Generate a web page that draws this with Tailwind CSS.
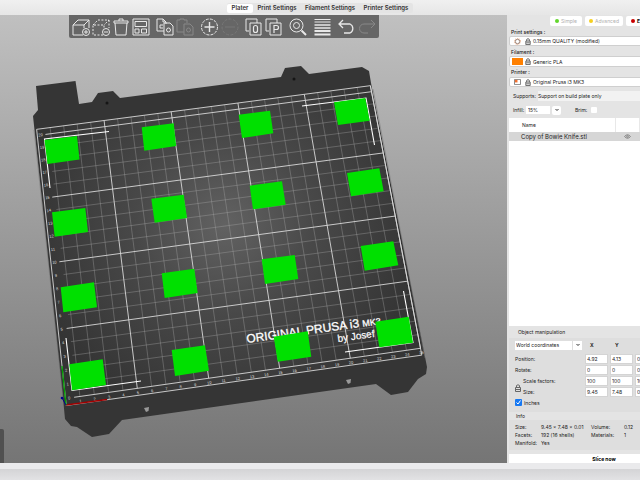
<!DOCTYPE html>
<html lang="en">
<head>
    <meta charset="UTF-8">
    <meta name="viewport" content="width=device-width, initial-scale=1.0">
    <title>PrusaSlicer - Plater</title>
    <script src="https://cdn.jsdelivr.net/npm/@tailwindcss/browser@4"></script>
</head>
<body class="flex h-screen flex-col overflow-hidden bg-[#e6e6e6] font-['Inter',sans-serif] text-[6px] leading-[8px] text-[#333]">
    <header class="flex h-[15px] shrink-0 justify-center bg-gradient-to-b from-[#f0f0f0] to-[#e6e6e6] pt-[3px]">
        <nav class="flex h-[10px] items-center rounded-xs bg-[#e4e4e4] font-semibold">
            <button class="h-[9px] w-[26px] rounded-xs bg-white">Plater</button>
            <button class="h-[9px] w-[48px]">Print Settings</button>
            <button class="h-[9px] w-[58px]">Filament Settings</button>
            <button class="h-[9px] w-[54px]">Printer Settings</button>
        </nav>
    </header>

    <main class="flex min-h-0 flex-1">
        <section class="relative min-w-0 flex-1 overflow-hidden bg-gradient-to-b from-[#c0c0c0] to-[#757575]">
            <svg id="scene" viewBox="0 15 507 448" preserveAspectRatio="xMinYMin meet" class="block h-full w-full" font-family="Liberation Sans, sans-serif">
                <defs>
                    <radialGradient id="bedLight" gradientUnits="userSpaceOnUse" cx="225" cy="225" r="200">
                        <stop offset="0" stop-color="#626262"/>
                        <stop offset="0.45" stop-color="#484848"/>
                        <stop offset="1" stop-color="#343434"/>
                    </radialGradient>
                </defs>
                <!-- steel sheet -->
                <path fill="#353535" d="M36 86L75.500 81L79 104L92 102L98 93L113 91L120 98L281 77L285 68L301 66L309 74L362 67L369 71L371 83L427 367L426 374L418 379L408 392L391 395L376 384L122 420L109 434L92 437L77 427L71 426L65 419L63 398L33 116L38 110Z"/>
                <path id="bedArea" fill="url(#bedLight)"/>
                <path fill="none" stroke="#777" stroke-width="0.500" d="M34 130L63 398M373 89L425 358"/>
                <circle cx="107" cy="103" r="1.500" fill="#151515"/>
                <circle cx="294" cy="79" r="1.500" fill="#151515"/>
                <path fill="#999" d="M144 408L149 407L148.500 411L146 412Z M346 380L351 379L350.500 383L348 384Z"/>
                <path id="minorLines" fill="none" stroke="#aaa" stroke-opacity="0.600" stroke-width="0.600"/>
                <path id="majorLines" fill="none" stroke="#d8d8d8" stroke-width="0.900"/>
                <path fill="none" stroke="#fff" stroke-width="1.100" d="M109 131.500L44.500 139L50 188M66 338L72 390.500L141 381M302 106L366 98L374.500 145M403.500 291L413 342.500L345 352"/>
                <g id="labels" fill="#ddd" font-size="4" text-anchor="middle"></g>
                <g fill="#fff">
                    <text transform="translate(247 343) rotate(-8)" font-size="12" stroke="#fff" stroke-width="0.300">ORIGINAL PRUSA i3 <tspan font-size="9">MK3</tspan></text>
                    <text transform="translate(338 342) rotate(-8)" font-size="10" stroke="#fff" stroke-width="0.200">by Josef Prusa</text>
                </g>
                <path stroke="#a00000" stroke-width="1.300" d="M66 405L107 399.500"/>
                <path stroke="#00a000" stroke-width="1.300" d="M66 405L62 366"/>
                <path stroke="#000090" stroke-width="1" d="M66 405L62 398"/>
                <circle cx="62" cy="398" r="1.300" fill="#000090"/>
                <!-- copies of the model -->
                <g fill="#00e000">
                    <path d="M44.500 140L77 136L79.500 159.500L47.500 164Z"/>
                    <path d="M141.700 127.300L173.700 123.300L176.200 146L144.300 150.700Z"/>
                    <path d="M238.700 114.700L270 110.700L273.300 133.300L242 138Z"/>
                    <path d="M334 102.300L365.300 98L369.700 120.700L338 125Z"/>
                    <path d="M52 212.300L85.300 208L88 232L54.700 236.700Z"/>
                    <path d="M151.300 198.700L183.700 194.700L187 218L154.700 222.700Z"/>
                    <path d="M249.700 185.700L282 181.300L285.700 204.700L253 209.300Z"/>
                    <path d="M347 173L379.300 168.300L383.700 191.300L351 196.300Z"/>
                    <path d="M60.700 287.300L94 282.300L97 307.300L63.300 312.300Z"/>
                    <path d="M161.700 273.300L194.300 268.700L197.700 293L164.700 298Z"/>
                    <path d="M261.700 259.300L294.700 255L298.300 279L265 284Z"/>
                    <path d="M360.700 246L393.300 241.300L398.300 265.300L364.700 270.700Z"/>
                    <path d="M69.300 364.300L102.700 359.300L106 385L72 390.300Z"/>
                    <path d="M171.700 350L205 345.300L209 370.700L175 376Z"/>
                    <path d="M273.700 336.700L307.700 331.300L311.300 356.700L277.700 361.700Z"/>
                    <path d="M375.300 321.700L408.700 316.700L413 342.700L379.300 347.300Z"/>
                </g>
            </svg>

            <!-- toolbar floats over the 3D view -->
            <div class="absolute top-0 left-[69px] flex h-[23px] w-[310px] items-center rounded-b-xs bg-[#666] pl-[2px] text-[#e8e8e8] [&_svg]:h-5 [&_svg]:w-5 [&_svg]:fill-none [&_svg]:stroke-current">
                <button aria-label="Add"><svg viewBox="0 0 20 20"><path d="M12 18H2V8H13V11M2 8L7 3H18L13 8M18 3V11"/><circle cx="15" cy="15" r="3.500"/><path d="M13 15H17M15 13V17"/></svg></button>
                <button aria-label="Delete"><svg viewBox="0 0 20 20"><path stroke-dasharray="2 1.500" d="M12 18H2V8H13V11M2 8L7 3H18L13 8M18 3V11"/><circle cx="15" cy="15" r="3.500"/><path d="M13 15H17"/></svg></button>
                <button aria-label="Delete all"><svg viewBox="0 0 20 20"><path d="M4 6L5 18H15L16 6M3 6V4H17V6ZM8 4V2H12V4"/></svg></button>
                <button aria-label="Arrange"><svg viewBox="0 0 20 20"><path d="M2 2H18V18H2ZM4 4.500H15.500V9.500H4ZM4 12H8V16H4ZM10.500 12H15.500V16H10.500Z"/></svg></button>
                <button class="ml-1" aria-label="Copy"><svg viewBox="0 0 20 20"><path d="M9 14H2V2H8L11 5V7M9 6H15L18 9V18H9ZM8 2V5H11"/><circle cx="13.500" cy="13" r="2"/><path d="M8 8H5V11H8"/></svg></button>
                <button class="text-[#888]" aria-label="Paste" disabled><svg viewBox="0 0 20 20"><path d="M9 15H2V3H5V2H9V3H12V6M9 7H15L18 10V18H9Z"/><circle cx="13.500" cy="13" r="2"/></svg></button>
                <button class="ml-1" aria-label="Add instance"><svg viewBox="0 0 20 20"><circle cx="10.500" cy="10" r="8" stroke-dasharray="3 1.200"/><path stroke-width="1.400" d="M5.500 10H15.500M10.500 5V15"/></svg></button>
                <button class="text-[#777]" aria-label="Remove instance" disabled><svg viewBox="0 0 20 20"><circle cx="11" cy="10" r="8" stroke-dasharray="3 1.500"/><path d="M6 10H16"/></svg></button>
                <button class="ml-1" aria-label="Split to objects"><svg viewBox="0 0 20 20"><path d="M6 14H3V2H14V6M7 6H18V18H7Z"/><rect x="10.500" y="8.500" width="4" height="7" rx="2" stroke-width="1.200"/></svg></button>
                <button aria-label="Split to parts"><svg viewBox="0 0 20 20"><path d="M6 14H3V2H14V6M7 6H18V18H7Z"/><path stroke-width="1.200" d="M11 16V8.500H13.500A2 2 0 0 1 13.500 12.500H11"/></svg></button>
                <button class="ml-1" aria-label="Search"><svg viewBox="0 0 20 20"><circle cx="9.500" cy="8.500" r="6.500"/><circle cx="9.500" cy="8.500" r="3"/><path stroke-width="2" d="M14.500 13.500L19 18"/></svg></button>
                <button class="ml-1" aria-label="Variable layer height"><svg viewBox="0 0 20 20"><path stroke-width="1" d="M3.500 2.500H19.500M3.500 5H19.500"/><path stroke-width="1.500" d="M3.500 8H19.500M3.500 11H19.500"/><path stroke-width="2" d="M3.500 14H19.500M3.500 17.500H19.500"/></svg></button>
                <button class="ml-1.5" aria-label="Undo"><svg viewBox="0 0 20 20"><path stroke-width="1.300" d="M6 3L2 7L6 11M2 7H13A5 5 0 0 1 13 16H7"/></svg></button>
                <button class="text-[#888]" aria-label="Redo" disabled><svg viewBox="0 0 20 20"><path d="M14 3L18 7L14 11M18 7H7A4.500 4.500 0 0 0 7 16H11"/></svg></button>
            </div>
            <div class="absolute bottom-0 left-0 h-[34px] w-1 rounded-tr-xs bg-[#505050]"></div>
        </section>

        <aside class="w-[133px] shrink-0 overflow-hidden bg-[#e4e4e4] pl-[2px] text-[5px] text-[#222]">
            <div class="flex h-full w-[190px] flex-col">
                <div class="flex h-3 items-center gap-[3px] pl-[41px]">
                    <button class="flex h-[10px] w-8 items-center justify-center gap-[2px] rounded-xs bg-white text-[#b0b0b0]"><span class="size-1 rounded-full bg-[#62d62c]"></span>Simple</button>
                    <button class="flex h-[10px] w-[38px] items-center justify-center gap-[2px] rounded-xs bg-white text-[#b0b0b0]"><span class="size-1 rounded-full bg-[#f5cf20]"></span>Advanced</button>
                    <button class="flex h-[10px] w-8 items-center justify-center gap-[2px] rounded-xs bg-white font-bold text-black"><span class="size-1 rounded-full bg-[#c80000]"></span>Expert</button>
                </div>

                <p class="mt-[1px] h-2 pl-[2px] font-medium">Print settings :</p>
                <button class="flex h-[10px] shrink-0 items-center rounded-l-xs border border-[#cfcfcf] bg-white pl-1">
                    <svg class="h-[7px] w-[7px]" viewBox="0 0 8 8" fill="none" stroke="#8a7468"><circle cx="4" cy="4" r="2.500"/><circle cx="4" cy="4" r="3.500" stroke="#e09060" stroke-dasharray="1 1.200"/></svg>
                    <svg class="ml-1 h-[7px] w-[6px]" viewBox="0 0 6 8" fill="none" stroke="#555"><path d="M.5 3.500H5.500V7.500H.5ZM1.500 3.500V1.500Q3 0 4.500 1.500V3.500M1 5.500H5"/></svg>
                    <span class="ml-[2px]">0.15mm QUALITY (modified)</span>
                </button>
                <p class="mt-[2px] h-2 pl-[2px] font-medium">Filament :</p>
                <button class="flex h-[11px] shrink-0 items-center rounded-l-xs border border-[#cfcfcf] bg-white pl-[2px]">
                    <span class="h-[7px] w-[11px] bg-[#ff8000]"></span>
                    <svg class="ml-[2px] h-[7px] w-[6px]" viewBox="0 0 6 8" fill="none" stroke="#555"><path d="M.5 3.500H5.500V7.500H.5ZM1.500 3.500V1.500Q3 0 4.500 1.500V3.500M1 5.500H5"/></svg>
                    <span class="ml-[2px]">Generic PLA</span>
                </button>
                <p class="mt-[1px] h-2 pl-[2px] font-medium">Printer :</p>
                <button class="mt-[1px] flex h-[10px] shrink-0 items-center rounded-l-xs border border-[#cfcfcf] bg-white pl-1">
                    <svg class="h-[6px] w-[7px]" viewBox="0 0 8 7" fill="none" stroke="#777"><path d="M.5.5H7.500V6.500H.5Z"/><path fill="#f07030" stroke="none" d="M1 1H4V4H1Z"/></svg>
                    <svg class="ml-1 h-[7px] w-[6px]" viewBox="0 0 6 8" fill="none" stroke="#555"><path d="M.5 3.500H5.500V7.500H.5ZM1.500 3.500V1.500Q3 0 4.500 1.500V3.500M1 5.500H5"/></svg>
                    <span class="ml-[2px]">Original Prusa i3 MK3</span>
                </button>

                <div class="mt-1 flex h-[10px] shrink-0 items-center gap-[2px] pl-1">
                    <label for="supports">Supports:</label>
                    <select id="supports" class="h-[10px] flex-1 appearance-none bg-[#f2f2f2]"><option>Support on build plate only</option></select>
                </div>
                <div class="mt-1 flex h-[10px] shrink-0 items-center pl-1">
                    <label for="infill" class="w-[13px]">Infill:</label>
                    <input id="infill" value="15%" class="h-2 w-6 bg-white pl-[2px]">
                    <button class="ml-[2px] flex h-[9px] w-[9px] items-center justify-center rounded-xs bg-white" aria-label="Infill values"><svg class="h-1 w-1" viewBox="0 0 4 4" fill="none" stroke="#333"><path d="M.5 1L2 2.500L3.500 1"/></svg></button>
                    <label for="brim" class="ml-[14px] w-4">Brim:</label>
                    <input id="brim" type="checkbox" class="size-[6px] appearance-none rounded-[1px] bg-white">
                </div>

                <div class="mt-[3px] flex min-h-0 flex-1 flex-col bg-white">
                    <table class="w-full table-fixed">
                        <thead>
                            <tr class="h-[14px]">
                                <th class="w-[106px] pl-[13px] text-left font-normal">Name</th>
                                <th class="w-6 border-x border-[#e8e8e8]"></th>
                                <th></th>
                            </tr>
                        </thead>
                        <tbody>
                            <tr class="h-[9px] bg-[#d6d6d6] text-[6px]">
                                <td class="pl-3">Copy of Bowie Knife.stl</td>
                                <td><svg class="mx-auto h-[5px] w-[7px]" viewBox="0 0 7 5" fill="none" stroke="#777" stroke-width="0.800"><path d="M.5 2.500Q3.500-1 6.500 2.500Q3.500 6 .5 2.500Z"/><circle cx="3.500" cy="2.500" r=".8"/></svg></td>
                                <td></td>
                            </tr>
                        </tbody>
                    </table>
                </div>

                <h2 class="flex h-3 shrink-0 items-center pl-[9px]">Object manipulation</h2>
                <div class="bg-[#dedede] pt-[2px] pb-1 pl-[6px]">
                    <div class="grid h-[10px] grid-cols-[68px_23px_23px_23px] items-center gap-x-[2px] font-bold">
                        <div class="flex gap-[1px]">
                            <select class="h-[9px] w-[57px] appearance-none bg-white pl-[1px] font-normal" aria-label="Coordinates"><option>World coordinates</option></select>
                            <button class="flex h-[9px] w-[9px] items-center justify-center bg-white" aria-label="Open coordinates"><svg class="h-1 w-1" viewBox="0 0 4 4" fill="none" stroke="#333"><path d="M.5 1L2 2.500L3.500 1"/></svg></button>
                        </div>
                        <span class="pl-[5px]">X</span><span class="pl-[5px]">Y</span><span class="pl-[5px]">Z</span>
                    </div>
                    <div class="mt-[3px] grid auto-rows-[11px] grid-cols-[68px_23px_23px_23px] items-center gap-x-[2px] [&_input]:h-[10px] [&_input]:w-full [&_input]:border [&_input]:border-[#d4d4d4] [&_input]:bg-white [&_input]:pl-[1px]">
                        <label for="px">Position:</label><input id="px" value="4.92"><input value="4.13" aria-label="Position Y"><input value="0.00" aria-label="Position Z">
                        <label for="rx">Rotate:</label><input id="rx" value="0"><input value="0" aria-label="Rotate Y"><input value="0" aria-label="Rotate Z">
                        <label for="sx" class="pl-2">Scale factors:</label><input id="sx" value="100"><input value="100" aria-label="Scale Y"><input value="100" aria-label="Scale Z">
                        <label for="dx" class="relative pl-2">Size:<svg class="absolute -top-[4px] left-0 h-[8px] w-[6px]" viewBox="0 0 6 8" fill="none" stroke="#666"><path d="M.5 3.500H5.500V7.500H.5ZM1.500 3.500V1.500Q3 0 4.500 1.500V3.500M1 5.500H5"/></svg></label><input id="dx" value="9.45"><input value="7.48" aria-label="Size Y"><input value="0.01" aria-label="Size Z">
                    </div>
                    <label class="flex h-[11px] items-center gap-[2px]">
                        <span class="relative size-[7px]"><input type="checkbox" checked class="block size-[7px] appearance-none rounded-[1px] bg-[#1678f2]"><svg class="pointer-events-none absolute inset-0 size-[7px]" viewBox="0 0 7 7" fill="none" stroke="#fff"><path d="M1.500 3.500L3 5L5.500 1.500"/></svg></span>
                        Inches
                    </label>
                </div>
                <h2 class="flex h-2 shrink-0 items-center pl-[7px]">Info</h2>
                <dl class="grid auto-rows-[8px] grid-cols-[26px_50px_33px_30px] items-center bg-[#dedede] pt-[3px] pb-[3px] pl-[6px] whitespace-nowrap">
                    <dt>Size:</dt><dd>9.45 x 7.48 x 0.01</dd><dt>Volume:</dt><dd>0.12</dd>
                    <dt>Facets:</dt><dd>192 (16 shells)</dd><dt>Materials:</dt><dd>1</dd>
                    <dt>Manifold:</dt><dd>Yes</dd>
                </dl>
                <button class="mt-1 h-[9px] shrink-0 bg-white text-[5px] font-bold text-black">Slice now</button>
            </div>
        </aside>
    </main>

    <footer class="h-[17px] shrink-0 border-t-[6px] border-[#eaeaec] bg-gradient-to-b from-[#d4d4d6] to-[#e2e2e4]"></footer>

    <script>
        // corners of the printed grid: top left, top right, bottom right, bottom left
        const corners = [[37.3, 135.5], [371.5, 91.7], [420.5, 348.3], [65.5, 398.5]];
        const COLS = 25;
        const ROWS = 20;

        function makeProjection([a, b, c, d]) {
            const dx1 = b[0] - c[0], dx2 = d[0] - c[0], sx = a[0] - b[0] + c[0] - d[0];
            const dy1 = b[1] - c[1], dy2 = d[1] - c[1], sy = a[1] - b[1] + c[1] - d[1];
            const det = dx1 * dy2 - dx2 * dy1;
            const g = (sx * dy2 - dx2 * sy) / det;
            const h = (dx1 * sy - sx * dy1) / det;
            return (x, y) => {
                const u = x / COLS, v = 1 - y / ROWS;
                const w = g * u + h * v + 1;
                return [
                    ((b[0] - a[0] + g * b[0]) * u + (d[0] - a[0] + h * d[0]) * v + a[0]) / w,
                    ((b[1] - a[1] + g * b[1]) * u + (d[1] - a[1] + h * d[1]) * v + a[1]) / w
                ];
            };
        }

        const project = makeProjection(corners);
        const line = (x1, y1, x2, y2) => `M${project(x1, y1)}L${project(x2, y2)}`;
        const label = (x, y, text) => {
            const [px, py] = project(x, y);
            return `<text transform="translate(${px} ${py}) rotate(-8)">${text}</text>`;
        };

        let minor = '';
        let major = line(0, -0.5, COLS, -0.5) + line(0, 20.5, COLS, 20.5) + line(0, -0.5, 0, 20.5) + line(COLS, -0.5, COLS, 20.5);
        let labels = '';
        for (let x = 1; x <= COLS; x++) {
            if (x % 5) minor += line(x, 0, x, 20.5);
            else major += line(x, 0, x, 20.5);
            labels += label(x, -0.42, x);
        }
        for (let y = 0; y <= ROWS; y++) {
            if (y % 5) minor += line(0.8, y, COLS, y);
            else major += line(0.6, y, COLS, y);
            labels += label(0.25, y - 0.1, y);
        }
        document.getElementById('minorLines').setAttribute('d', minor);
        document.getElementById('majorLines').setAttribute('d', major);
        document.getElementById('labels').innerHTML = labels;
        document.getElementById('bedArea').setAttribute('d',
            `M${project(0, -0.5)}L${project(COLS, -0.5)}L${project(COLS, 20.5)}L${project(0, 20.5)}Z`);
    </script>
</body>
</html>
